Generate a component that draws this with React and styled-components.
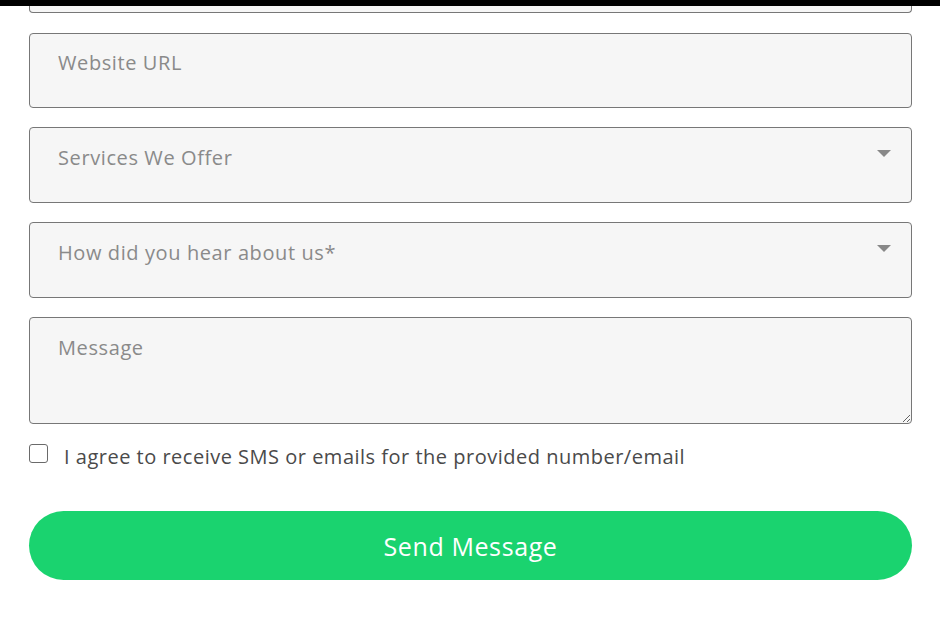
import styled, { createGlobalStyle } from "styled-components";

const GlobalStyle = createGlobalStyle`
  body {
    margin: 0;
    background: #ffffff;
    font-family: "Open Sans", "Liberation Sans", sans-serif;
  }
`;

const TopBar = styled.div`
  height: 6px;
  background: #000000;
`;

const Form = styled.form`
  display: flex;
  flex-direction: column;
  padding: 0 28px 0 29px;
`;

const CutField = styled.div`
  height: 6px;
  border: 1px solid #777;
  border-top: none;
  border-radius: 0 0 4px 4px;
  background: #f6f6f6;
  margin-bottom: 20px;
`;

const fieldBase = `
  box-sizing: border-box;
  width: 100%;
  border: 1px solid #777;
  border-radius: 4px;
  background: #f6f6f6;
  font-family: "Open Sans", "Liberation Sans", sans-serif;
  font-size: 20px;
  letter-spacing: 0.6px;
  color: #444;
  outline: none;
`;

const Input = styled.input`
  ${fieldBase}
  height: 75px;
  padding: 0 28px 16px 28px;
  margin-bottom: 19px;
  &::placeholder {
    color: #8a8a8a;
  }
`;

const Select = styled.div`
  ${fieldBase}
  height: 76px;
  padding: 16px 20px 0 28px;
  margin-bottom: 19px;
  display: flex;
  justify-content: space-between;
  align-items: flex-start;
  color: #8a8a8a;
`;

const Arrow = styled.span`
  width: 0;
  height: 0;
  margin-top: 6px;
  border-left: 7px solid transparent;
  border-right: 7px solid transparent;
  border-top: 7px solid #888;
`;

const TextArea = styled.textarea`
  ${fieldBase}
  height: 107px;
  padding: 16px 28px;
  resize: vertical;
  display: block;
  margin-bottom: 19px;
  &::placeholder {
    color: #8a8a8a;
  }
`;

const AgreeRow = styled.label`
  display: flex;
  align-items: center;
  gap: 16px;
  font-size: 20px;
  letter-spacing: 0.5px;
  color: #4a4a4a;
  margin-bottom: 41px;
`;

const Box = styled.span`
  box-sizing: border-box;
  width: 19px;
  height: 19px;
  border: 1.5px solid #6a6a6a;
  border-radius: 3px;
  background: #fff;
  flex-shrink: 0;
  margin-top: -6px;
`;

const SendButton = styled.button`
  height: 69px;
  border: none;
  border-radius: 35px;
  background: #1ad36f;
  color: #ffffff;
  font-family: "Open Sans", "Liberation Sans", sans-serif;
  font-size: 25px;
  letter-spacing: 0.6px;
  cursor: pointer;
`;

export default function App() {
  return (
    <>
      <GlobalStyle />
      <TopBar />
      <Form onSubmit={(e) => e.preventDefault()}>
        <CutField />
        <Input placeholder="Website URL" />
        <Select>
          <span>Services We Offer</span>
          <Arrow />
        </Select>
        <Select>
          <span>How did you hear about us*</span>
          <Arrow />
        </Select>
        <TextArea placeholder="Message" />
        <AgreeRow>
          <Box />
          <span>I agree to receive SMS or emails for the provided number/email</span>
        </AgreeRow>
        <SendButton type="submit">Send Message</SendButton>
      </Form>
    </>
  );
}
